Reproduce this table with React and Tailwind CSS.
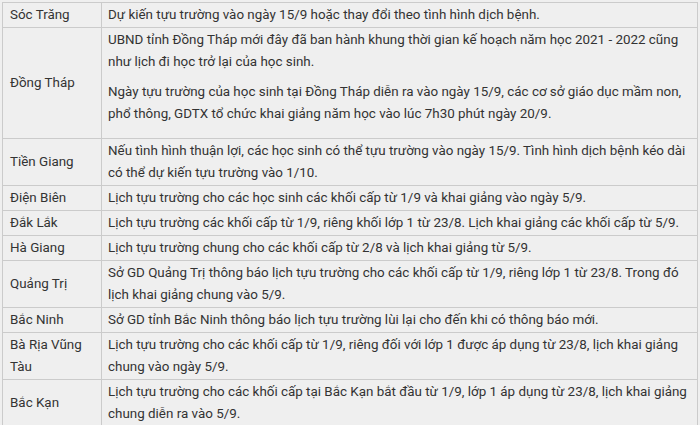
import React from "react";

const rows = [
    { province: "Sóc Trăng", text: ["Dự kiến tựu trường vào ngày 15/9 hoặc thay đổi theo tình hình dịch bệnh."] },
    {
        province: "Đồng Tháp",
        text: [
            "UBND tỉnh Đồng Tháp mới đây đã ban hành khung thời gian kế hoạch năm học 2021 - 2022 cũng như lịch đi học trở lại của học sinh.",
            "Ngày tựu trường của học sinh tại Đồng Tháp diễn ra vào ngày 15/9, các cơ sở giáo dục mầm non, phổ thông, GDTX tổ chức khai giảng năm học vào lúc 7h30 phút ngày 20/9.",
        ],
    },
    { province: "Tiền Giang", text: ["Nếu tình hình thuận lợi, các học sinh có thể tựu trường vào ngày 15/9. Tình hình dịch bệnh kéo dài có thể dự kiến tựu trường vào 1/10."] },
    { province: "Điện Biên", text: ["Lịch tựu trường cho các học sinh các khối cấp từ 1/9 và khai giảng vào ngày 5/9."] },
    { province: "Đắk Lắk", text: ["Lịch tựu trường các khối cấp từ 1/9, riêng khối lớp 1 từ 23/8. Lịch khai giảng các khối cấp từ 5/9."] },
    { province: "Hà Giang", text: ["Lịch tựu trường chung cho các khối cấp từ 2/8 và lịch khai giảng từ 5/9."] },
    { province: "Quảng Trị", text: ["Sở GD Quảng Trị thông báo lịch tựu trường cho các khối cấp từ 1/9, riêng lớp 1 từ 23/8. Trong đó lịch khai giảng chung vào 5/9."] },
    { province: "Bắc Ninh", text: ["Sở GD tỉnh Bắc Ninh thông báo lịch tựu trường lùi lại cho đến khi có thông báo mới."] },
    { province: "Bà Rịa Vũng Tàu", text: ["Lịch tựu trường cho các khối cấp từ 1/9, riêng đối với lớp 1 được áp dụng từ 23/8, lịch khai giảng chung vào ngày 5/9."] },
    { province: "Bắc Kạn", text: ["Lịch tựu trường cho các khối cấp tại Bắc Kạn bắt đầu từ 1/9, lớp 1 áp dụng từ 23/8, lịch khai giảng chung diễn ra vào 5/9."] },
];

// bảng lịch tựu trường
const App = () => {
    return (
        <div className="w-[700px] h-[425px] overflow-hidden bg-[#efefef] pt-[2px] pl-[2px]" style={{ fontFamily: "Roboto, 'Noto Sans', sans-serif" }}>
            <table className="w-[696px] border-collapse text-[13.4px] leading-[22px] text-[#333333]">
                <tbody>
                    {rows.map((row) => (
                        <tr key={row.province}>
                            <td className="w-[99px] border border-[#cbcbcb] pl-[7px] pr-[4px] py-[1px] align-middle">
                                {row.province}
                            </td>
                            <td className="border border-[#cbcbcb] pl-[6px] pr-[4px] py-[1px] align-middle">
                                {row.text.length === 1 ? row.text[0] :
                                    row.text.map((p, i) => (
                                        <p key={i} className="first:mb-[8px] last:mb-[12px]">{p}</p>
                                    ))}
                            </td>
                        </tr>
                    ))}
                </tbody>
            </table>
        </div>
    );
};

export default App;
